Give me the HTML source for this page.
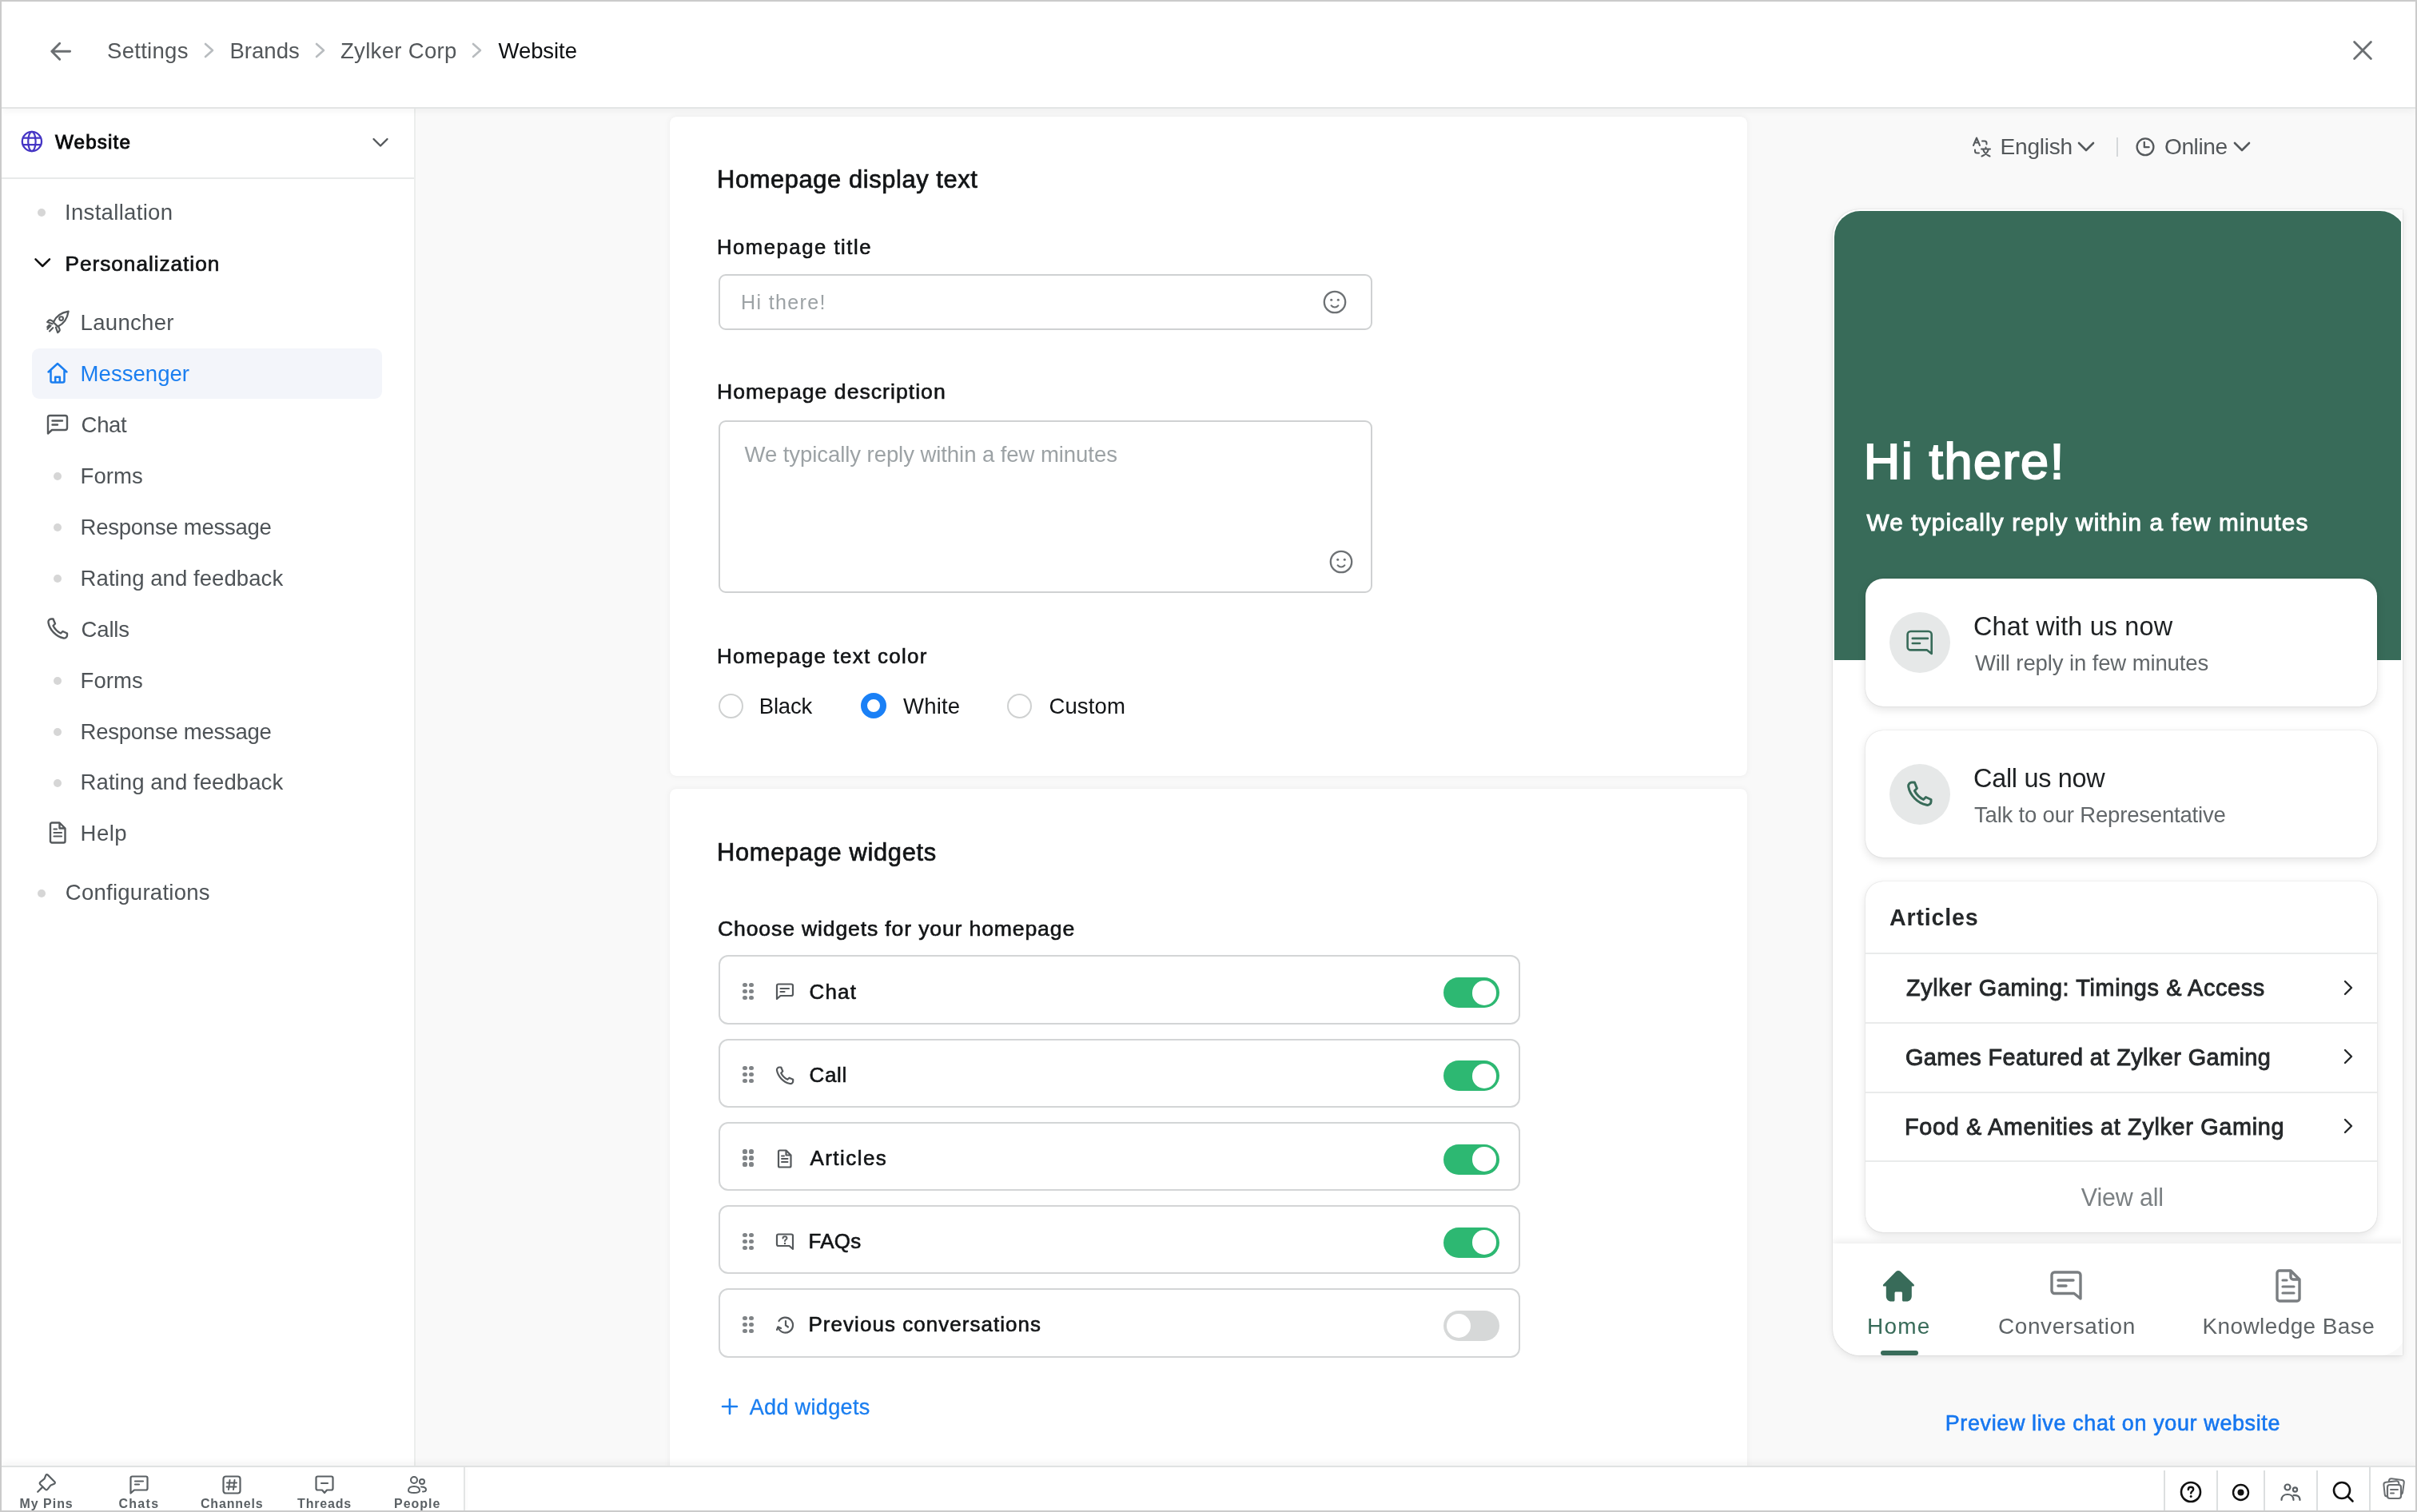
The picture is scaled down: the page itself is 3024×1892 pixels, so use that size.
<!DOCTYPE html>
<html><head><meta charset="utf-8"><title>Website - Messenger</title>
<style>
html,body{margin:0;padding:0;}
body{width:3024px;height:1892px;overflow:hidden;position:relative;background:#fff;font-family:"Liberation Sans",sans-serif;}
.t{position:absolute;white-space:pre;}
svg{overflow:visible}
</style></head><body>
<div style="position:absolute;left:2px;top:2px;width:3020px;height:1888px;background:#f9f9f9"></div><div style="position:absolute;left:2px;top:134px;width:518px;height:1702px;background:#fff;border-right:2px solid #eceeed;box-sizing:border-box"></div><div style="position:absolute;left:2px;top:2px;width:3020px;height:134px;background:#fff;border-bottom:2px solid #e3e5e5;box-sizing:border-box;box-shadow:0 3px 9px rgba(0,0,0,0.045)"></div><svg style="position:absolute;left:60px;top:50px;" width="34" height="28" viewBox="0 0 34 28" fill="none"><path d="M27.6 14.3H4.8M14.7 4.3L4.8 14.3L14.7 24.3" stroke="#6b6f72" stroke-width="2.9" stroke-linecap="round" stroke-linejoin="round"/></svg><svg style="position:absolute;left:254px;top:52px;" width="16" height="22" viewBox="0 0 16 22" fill="none"><path d="M3 3L12 11L3 19" stroke="#b8bcbf" stroke-width="2.6" stroke-linecap="round" stroke-linejoin="round"/></svg><svg style="position:absolute;left:393px;top:52px;" width="16" height="22" viewBox="0 0 16 22" fill="none"><path d="M3 3L12 11L3 19" stroke="#b8bcbf" stroke-width="2.6" stroke-linecap="round" stroke-linejoin="round"/></svg><svg style="position:absolute;left:589px;top:52px;" width="16" height="22" viewBox="0 0 16 22" fill="none"><path d="M3 3L12 11L3 19" stroke="#b8bcbf" stroke-width="2.6" stroke-linecap="round" stroke-linejoin="round"/></svg><svg style="position:absolute;left:2940px;top:47px;" width="32" height="32" viewBox="0 0 32 32" fill="none"><path d="M5.6 5.6L26.4 26.4M26.4 5.6L5.6 26.4" stroke="#6b6f72" stroke-width="2.8" stroke-linecap="round"/></svg><div style="position:absolute;left:2px;top:222px;width:516px;height:2px;background:#e8eaea"></div><svg style="position:absolute;left:26px;top:163px;" width="28" height="28" viewBox="0 0 28 28" fill="none"><circle cx="13.9" cy="14" r="12.1" stroke="#4535c4" stroke-width="2.3"/><ellipse cx="13.9" cy="14" rx="4.7" ry="12.1" stroke="#4535c4" stroke-width="2.2"/><path d="M2.5 9.6H25.3M2.5 18.1H25.3" stroke="#4535c4" stroke-width="2.2"/></svg><svg style="position:absolute;left:463px;top:170px;" width="26" height="16" viewBox="0 0 26 16" fill="none"><path d="M4.5 4L13 12.5L21.5 4" stroke="#53575a" stroke-width="2.3" stroke-linecap="round" stroke-linejoin="round"/></svg><div style="position:absolute;left:47.0px;top:261.0px;width:10px;height:10px;border-radius:50%;background:#d6d6d6"></div><svg style="position:absolute;left:41px;top:320px;" width="24" height="18" viewBox="0 0 24 18" fill="none"><path d="M3.5 4.3L12.2 13L21 4.3" stroke="#111" stroke-width="2.5" stroke-linecap="round" stroke-linejoin="round"/></svg><div style="position:absolute;left:40px;top:436px;width:438px;height:63px;background:#f3f5fa;border-radius:9px"></div><svg style="position:absolute;left:56px;top:387.1px;" width="32" height="32" viewBox="0 0 32 32" fill="none"><path d="M10.8 16.2C13.5 9.8 20 4.2 29.6 2.6C28.2 12 22.6 18.6 16.3 21.6Z" stroke="#55595c" stroke-width="2.3" stroke-linejoin="round"/><circle cx="20.6" cy="11.6" r="2.4" stroke="#55595c" stroke-width="2.1"/><path d="M11.2 15.4L7.2 13.6C6.4 13.3 5.6 13.5 5 14.1L3.2 16L9.6 18.2M17 21.2L18.6 25.2C18.9 26 18.7 26.8 18.1 27.4L16.2 29.2L13.9 22.6" stroke="#55595c" stroke-width="2.2" stroke-linejoin="round" stroke-linecap="round"/><path d="M7.6 20.6L3.4 24.8M10.2 23.2L6 27.4M5.8 19.6L3.2 22.2" stroke="#55595c" stroke-width="2.1" stroke-linecap="round"/></svg><svg style="position:absolute;left:56px;top:451.0px;" width="32" height="32" viewBox="0 0 32 32" fill="none"><path d="M4.5 14.5L16 4L27.5 14.5M7.5 12V25.5C7.5 26.6 8.4 27.5 9.5 27.5H22.5C23.6 27.5 24.5 26.6 24.5 25.5V12M13.2 27.5V20.8H18.8V27.5" stroke="#1a7ef0" stroke-width="2.5" stroke-linecap="round" stroke-linejoin="round"/></svg><svg style="position:absolute;left:56px;top:514.9px;" width="32" height="32" viewBox="0 0 32 32" fill="none"><path d="M4 7.5C4 6.1 5.1 5 6.5 5H25.5C26.9 5 28 6.1 28 7.5V20.5C28 21.9 26.9 23 25.5 23H9L4 27.5Z" stroke="#55595c" stroke-width="2.4" stroke-linejoin="round"/><path d="M9.5 11.5H22M9.5 16.5H16" stroke="#55595c" stroke-width="2.4" stroke-linecap="round"/></svg><div style="position:absolute;left:66.7px;top:591.3px;width:10px;height:10px;border-radius:50%;background:#d6d6d6"></div><div style="position:absolute;left:66.7px;top:655.2px;width:10px;height:10px;border-radius:50%;background:#d6d6d6"></div><div style="position:absolute;left:66.7px;top:719.1px;width:10px;height:10px;border-radius:50%;background:#d6d6d6"></div><svg style="position:absolute;left:56px;top:770.5px;" width="32" height="32" viewBox="0 0 32 32" fill="none"><path d="M8 3.5C6 3.5 4 5.5 4.5 8C6 17 14 25.5 23.5 27.5C26 28 28 26 28 24V21.5L22.5 19L20 21.5C16 19.5 12.5 16 10.5 12L13 9.5L10.5 3.5Z" stroke="#55595c" stroke-width="2.4" stroke-linejoin="round"/></svg><div style="position:absolute;left:66.7px;top:846.9000000000001px;width:10px;height:10px;border-radius:50%;background:#d6d6d6"></div><div style="position:absolute;left:66.7px;top:910.8px;width:10px;height:10px;border-radius:50%;background:#d6d6d6"></div><div style="position:absolute;left:66.7px;top:974.7px;width:10px;height:10px;border-radius:50%;background:#d6d6d6"></div><svg style="position:absolute;left:56px;top:1026.1px;" width="32" height="32" viewBox="0 0 32 32" fill="none"><path d="M7 5.5C7 4.4 7.9 3.5 9 3.5H18.5L25.5 10.5V26.5C25.5 27.6 24.6 28.5 23.5 28.5H9C7.9 28.5 7 27.6 7 26.5Z M18.5 3.5V10.5H25.5" stroke="#55595c" stroke-width="2.4" stroke-linejoin="round"/><path d="M11.5 16H21M11.5 20.5H21M11.5 11.5H15" stroke="#55595c" stroke-width="2.2" stroke-linecap="round"/></svg><div style="position:absolute;left:47.0px;top:1113.0px;width:10px;height:10px;border-radius:50%;background:#d6d6d6"></div><div style="position:absolute;left:838px;top:146px;width:1348px;height:825px;background:#fff;border-radius:8px;box-shadow:0 0 1px rgba(0,0,0,0.08),0 0 8px rgba(0,0,0,0.05)"></div><div style="position:absolute;left:838px;top:987px;width:1348px;height:913px;background:#fff;border-radius:8px;box-shadow:0 0 1px rgba(0,0,0,0.08),0 0 8px rgba(0,0,0,0.05)"></div><div style="position:absolute;left:899px;top:343px;width:818px;height:70px;border:2px solid #cfd1d2;border-radius:9px;box-sizing:border-box"></div><svg style="position:absolute;left:1653.8px;top:362.0px;" width="32" height="32" viewBox="0 0 32 32" fill="none"><circle cx="16.0" cy="16.0" r="13.2" stroke="#6d7174" stroke-width="2.3"/><circle cx="11.7" cy="13.2" r="1.5" fill="#6d7174"/><circle cx="20.3" cy="13.2" r="1.5" fill="#6d7174"/><path d="M11.7 20.4C14.0 23.2 18.0 23.2 20.3 20.4" stroke="#6d7174" stroke-width="2.2" stroke-linecap="round"/></svg><div style="position:absolute;left:899px;top:526px;width:818px;height:216px;border:2px solid #cfd1d2;border-radius:9px;box-sizing:border-box"></div><svg style="position:absolute;left:1662.0px;top:687.0px;" width="32" height="32" viewBox="0 0 32 32" fill="none"><circle cx="16.0" cy="16.0" r="13.2" stroke="#6d7174" stroke-width="2.3"/><circle cx="11.7" cy="13.2" r="1.5" fill="#6d7174"/><circle cx="20.3" cy="13.2" r="1.5" fill="#6d7174"/><path d="M11.7 20.4C14.0 23.2 18.0 23.2 20.3 20.4" stroke="#6d7174" stroke-width="2.2" stroke-linecap="round"/></svg><div style="position:absolute;left:898.5px;top:867.5px;width:31px;height:31px;border-radius:50%;box-sizing:border-box;border:2px solid #cfd1d1;background:#fff"></div><div style="position:absolute;left:1077px;top:867px;width:32px;height:32px;border-radius:50%;box-sizing:border-box;border:8px solid #1a80f6;background:#fff"></div><div style="position:absolute;left:1260.0px;top:867.5px;width:31px;height:31px;border-radius:50%;box-sizing:border-box;border:2px solid #cfd1d1;background:#fff"></div><div style="position:absolute;left:899px;top:1195.4px;width:1003px;height:86.5px;border:2px solid #d3d5d6;border-radius:12px;box-sizing:border-box;background:#fff"></div><div style="position:absolute;left:929.4px;top:1230.1000000000001px;width:5.2px;height:5.2px;border-radius:50%;background:#808487"></div><div style="position:absolute;left:937.4px;top:1230.1000000000001px;width:5.2px;height:5.2px;border-radius:50%;background:#808487"></div><div style="position:absolute;left:929.4px;top:1238.1000000000001px;width:5.2px;height:5.2px;border-radius:50%;background:#808487"></div><div style="position:absolute;left:937.4px;top:1238.1000000000001px;width:5.2px;height:5.2px;border-radius:50%;background:#808487"></div><div style="position:absolute;left:929.4px;top:1246.1000000000001px;width:5.2px;height:5.2px;border-radius:50%;background:#808487"></div><div style="position:absolute;left:937.4px;top:1246.1000000000001px;width:5.2px;height:5.2px;border-radius:50%;background:#808487"></div><svg style="position:absolute;left:968px;top:1227.4px;" width="28" height="28" viewBox="0 0 28 28" fill="none"><path d="M4 6.5C4 5.4 4.9 4.5 6 4.5H22C23.1 4.5 24 5.4 24 6.5V17C24 18.1 23.1 19 22 19H8.5L4 23Z" stroke="#55595c" stroke-width="2.2" stroke-linejoin="round"/><path d="M8.5 10H19M8.5 14H13.5" stroke="#55595c" stroke-width="2.2" stroke-linecap="round"/></svg><div style="position:absolute;left:1806px;top:1223.2px;width:70px;height:38px;border-radius:19px;background:#2db872"></div><div style="position:absolute;left:1841.5px;top:1227.0px;width:30.5px;height:30.5px;border-radius:50%;background:#fff"></div><div style="position:absolute;left:899px;top:1299.5500000000002px;width:1003px;height:86.5px;border:2px solid #d3d5d6;border-radius:12px;box-sizing:border-box;background:#fff"></div><div style="position:absolute;left:929.4px;top:1334.2500000000002px;width:5.2px;height:5.2px;border-radius:50%;background:#808487"></div><div style="position:absolute;left:937.4px;top:1334.2500000000002px;width:5.2px;height:5.2px;border-radius:50%;background:#808487"></div><div style="position:absolute;left:929.4px;top:1342.2500000000002px;width:5.2px;height:5.2px;border-radius:50%;background:#808487"></div><div style="position:absolute;left:937.4px;top:1342.2500000000002px;width:5.2px;height:5.2px;border-radius:50%;background:#808487"></div><div style="position:absolute;left:929.4px;top:1350.2500000000002px;width:5.2px;height:5.2px;border-radius:50%;background:#808487"></div><div style="position:absolute;left:937.4px;top:1350.2500000000002px;width:5.2px;height:5.2px;border-radius:50%;background:#808487"></div><svg style="position:absolute;left:968px;top:1331.5500000000002px;" width="28" height="28" viewBox="0 0 28 28" fill="none"><path d="M7 3.5C5.3 3.5 3.6 5.2 4 7.3C5.3 15 12.2 22.3 20.3 24C22.4 24.4 24.2 22.7 24.2 21V18.8L19.5 16.7L17.3 18.8C13.9 17.1 10.9 14.1 9.2 10.7L11.3 8.5L9.2 3.5Z" stroke="#55595c" stroke-width="2.2" stroke-linejoin="round"/></svg><div style="position:absolute;left:1806px;top:1327.3500000000001px;width:70px;height:38px;border-radius:19px;background:#2db872"></div><div style="position:absolute;left:1841.5px;top:1331.15px;width:30.5px;height:30.5px;border-radius:50%;background:#fff"></div><div style="position:absolute;left:899px;top:1403.7px;width:1003px;height:86.5px;border:2px solid #d3d5d6;border-radius:12px;box-sizing:border-box;background:#fff"></div><div style="position:absolute;left:929.4px;top:1438.4px;width:5.2px;height:5.2px;border-radius:50%;background:#808487"></div><div style="position:absolute;left:937.4px;top:1438.4px;width:5.2px;height:5.2px;border-radius:50%;background:#808487"></div><div style="position:absolute;left:929.4px;top:1446.4px;width:5.2px;height:5.2px;border-radius:50%;background:#808487"></div><div style="position:absolute;left:937.4px;top:1446.4px;width:5.2px;height:5.2px;border-radius:50%;background:#808487"></div><div style="position:absolute;left:929.4px;top:1454.4px;width:5.2px;height:5.2px;border-radius:50%;background:#808487"></div><div style="position:absolute;left:937.4px;top:1454.4px;width:5.2px;height:5.2px;border-radius:50%;background:#808487"></div><svg style="position:absolute;left:968px;top:1435.7px;" width="28" height="28" viewBox="0 0 28 28" fill="none"><path d="M6 5C6 4.2 6.7 3.5 7.5 3.5H15.5L21.5 9.5V23C21.5 23.8 20.8 24.5 20 24.5H7.5C6.7 24.5 6 23.8 6 23Z M15.5 3.5V9.5H21.5" stroke="#55595c" stroke-width="2.2" stroke-linejoin="round"/><path d="M10 14H17.5M10 18H17.5M10 10.5H13" stroke="#55595c" stroke-width="2" stroke-linecap="round"/></svg><div style="position:absolute;left:1806px;top:1431.5px;width:70px;height:38px;border-radius:19px;background:#2db872"></div><div style="position:absolute;left:1841.5px;top:1435.3px;width:30.5px;height:30.5px;border-radius:50%;background:#fff"></div><div style="position:absolute;left:899px;top:1507.8500000000001px;width:1003px;height:86.5px;border:2px solid #d3d5d6;border-radius:12px;box-sizing:border-box;background:#fff"></div><div style="position:absolute;left:929.4px;top:1542.5500000000002px;width:5.2px;height:5.2px;border-radius:50%;background:#808487"></div><div style="position:absolute;left:937.4px;top:1542.5500000000002px;width:5.2px;height:5.2px;border-radius:50%;background:#808487"></div><div style="position:absolute;left:929.4px;top:1550.5500000000002px;width:5.2px;height:5.2px;border-radius:50%;background:#808487"></div><div style="position:absolute;left:937.4px;top:1550.5500000000002px;width:5.2px;height:5.2px;border-radius:50%;background:#808487"></div><div style="position:absolute;left:929.4px;top:1558.5500000000002px;width:5.2px;height:5.2px;border-radius:50%;background:#808487"></div><div style="position:absolute;left:937.4px;top:1558.5500000000002px;width:5.2px;height:5.2px;border-radius:50%;background:#808487"></div><svg style="position:absolute;left:968px;top:1539.8500000000001px;" width="28" height="28" viewBox="0 0 28 28" fill="none"><path d="M4 6.5C4 5.4 4.9 4.5 6 4.5H22C23.1 4.5 24 5.4 24 6.5V23L19.5 19H6C4.9 19 4 18.1 4 17Z" stroke="#55595c" stroke-width="2.2" stroke-linejoin="round"/><path d="M11.5 9.5C11.5 8 12.6 7.2 14 7.2C15.4 7.2 16.5 8.1 16.5 9.4C16.5 11 14 11.2 14 13" stroke="#55595c" stroke-width="1.9" stroke-linecap="round"/><circle cx="14" cy="16" r="1.2" fill="#55595c"/></svg><div style="position:absolute;left:1806px;top:1535.65px;width:70px;height:38px;border-radius:19px;background:#2db872"></div><div style="position:absolute;left:1841.5px;top:1539.45px;width:30.5px;height:30.5px;border-radius:50%;background:#fff"></div><div style="position:absolute;left:899px;top:1612.0px;width:1003px;height:86.5px;border:2px solid #d3d5d6;border-radius:12px;box-sizing:border-box;background:#fff"></div><div style="position:absolute;left:929.4px;top:1646.7px;width:5.2px;height:5.2px;border-radius:50%;background:#808487"></div><div style="position:absolute;left:937.4px;top:1646.7px;width:5.2px;height:5.2px;border-radius:50%;background:#808487"></div><div style="position:absolute;left:929.4px;top:1654.7px;width:5.2px;height:5.2px;border-radius:50%;background:#808487"></div><div style="position:absolute;left:937.4px;top:1654.7px;width:5.2px;height:5.2px;border-radius:50%;background:#808487"></div><div style="position:absolute;left:929.4px;top:1662.7px;width:5.2px;height:5.2px;border-radius:50%;background:#808487"></div><div style="position:absolute;left:937.4px;top:1662.7px;width:5.2px;height:5.2px;border-radius:50%;background:#808487"></div><svg style="position:absolute;left:968px;top:1644.0px;" width="28" height="28" viewBox="0 0 28 28" fill="none"><path d="M5.5 17A9.5 9.5 0 1 0 6.5 9" stroke="#55595c" stroke-width="2.2" stroke-linecap="round"/><path d="M4.5 12.5V19.5H10" stroke="#55595c" stroke-width="0" /><path d="M4 20L5.5 16.5L9 18" stroke="#55595c" stroke-width="2.2" stroke-linecap="round" stroke-linejoin="round"/><path d="M15 9V14.5L18 16.5" stroke="#55595c" stroke-width="2.2" stroke-linecap="round"/></svg><div style="position:absolute;left:1806px;top:1639.8px;width:70px;height:38px;border-radius:19px;background:#d6d8d8"></div><div style="position:absolute;left:1809.5px;top:1643.6px;width:30.5px;height:30.5px;border-radius:50%;background:#fff"></div><svg style="position:absolute;left:901px;top:1748px;" width="24" height="24" viewBox="0 0 24 24" fill="none"><path d="M12 3V21M3 12H21" stroke="#1a7ef0" stroke-width="2.6" stroke-linecap="round"/></svg><svg style="position:absolute;left:2466px;top:170px;" width="26" height="28" viewBox="0 0 26 28" fill="none"><path d="M3 12L7 2.5L11 12M4.5 8.5H9.5" stroke="#55595c" stroke-width="2" stroke-linecap="round" stroke-linejoin="round"/><path d="M14 6.5H17C18.5 6.5 19.5 7.5 19.5 9V10.5" stroke="#55595c" stroke-width="2" stroke-linecap="round"/><path d="M5 17.5V19C5 20.5 6 21.5 7.5 21.5H10" stroke="#55595c" stroke-width="2" stroke-linecap="round"/><path d="M13 16.5H24M18.5 14.5V16.5M15 16.5C16 20.5 19 23.5 23.5 25.5M22 16.5C21 20.5 18 23.5 13.5 25.5" stroke="#55595c" stroke-width="2" stroke-linecap="round"/></svg><svg style="position:absolute;left:2598px;top:176px;" width="24" height="15" viewBox="0 0 24 15" fill="none"><path d="M3 3L12 12L21 3" stroke="#55595c" stroke-width="2.6" stroke-linecap="round" stroke-linejoin="round"/></svg><div style="position:absolute;left:2648px;top:172px;width:2px;height:24px;background:#d5d8da"></div><svg style="position:absolute;left:2670px;top:171px;" width="28" height="28" viewBox="0 0 28 28" fill="none"><circle cx="14" cy="12.8" r="10.4" stroke="#55595c" stroke-width="2.3"/><path d="M12.8 7V13.2H18.6" stroke="#55595c" stroke-width="2.3" stroke-linecap="round" stroke-linejoin="round"/></svg><svg style="position:absolute;left:2793px;top:176px;" width="24" height="15" viewBox="0 0 24 15" fill="none"><path d="M3 3L12 12L21 3" stroke="#55595c" stroke-width="2.6" stroke-linecap="round" stroke-linejoin="round"/></svg><div style="position:absolute;left:2293px;top:262px;width:712.5px;height:1434px;overflow:hidden;border-radius:34px 0 0 34px;box-shadow:0 0 2px rgba(0,0,0,0.16),0 3px 10px rgba(0,0,0,0.09)"><div style="position:absolute;left:0;top:0;width:718px;height:1434px;border-radius:34px;overflow:hidden;background:#fff"><div style="position:absolute;left:1.5px;top:1.5px;width:715px;height:562px;border-radius:32.5px 32.5px 0 0;background:#386b59"></div><div style="position:absolute;left:0;top:1294px;width:760px;height:140px;background:#fff;box-shadow:0 -3px 9px rgba(0,0,0,0.08)"></div><div style="position:absolute;left:711px;top:14px;width:1.5px;height:1390px;background:#fff"></div></div></div><div style="position:absolute;left:2334px;top:723.6px;width:640px;height:160.10000000000002px;background:#fff;border-radius:22px;box-shadow:0 0 1.5px rgba(0,0,0,0.2),0 4px 12px rgba(0,0,0,0.11)"></div><div style="position:absolute;left:2334px;top:914px;width:640px;height:159.29999999999995px;background:#fff;border-radius:22px;box-shadow:0 0 1.5px rgba(0,0,0,0.2),0 4px 12px rgba(0,0,0,0.11)"></div><div style="position:absolute;left:2334px;top:1103.4px;width:640px;height:438.5999999999999px;background:#fff;border-radius:22px;box-shadow:0 0 1.5px rgba(0,0,0,0.2),0 4px 12px rgba(0,0,0,0.11)"></div><div style="position:absolute;left:2363.8px;top:765.7px;width:76px;height:76px;border-radius:50%;background:#e6e8e8"></div><div style="position:absolute;left:2363.8px;top:955.6px;width:76px;height:76px;border-radius:50%;background:#e6e8e8"></div><svg style="position:absolute;left:2383px;top:785px;" width="38" height="38" viewBox="0 0 38 38" fill="none"><path d="M7.6 5H29.7C31.9 5 33.7 6.8 33.7 9V33L28 28.4H7.6C5.4 28.4 3.6 26.6 3.6 24.4V9C3.6 6.8 5.4 5 7.6 5Z" stroke="#386b59" stroke-width="2.6" stroke-linejoin="round"/><path d="M9.8 13.9H28.9M9.8 20H19" stroke="#386b59" stroke-width="2.6" stroke-linecap="round"/></svg><svg style="position:absolute;left:2383px;top:975px;" width="38" height="38" viewBox="0 0 38 38" fill="none"><path d="M9 4C6.7 4 4.2 6.3 4.7 9.2C6.5 20 16 30 27.5 32.3C30.3 32.9 33 30.6 33 28.3V25.5L26.5 22.5L23.5 25.5C18.8 23.2 14.7 19 12.4 14.5L15.4 11.5L12.4 4Z" stroke="#386b59" stroke-width="3" stroke-linejoin="round"/></svg><div style="position:absolute;left:2334px;top:1191.7px;width:640px;height:2.0px;background:#e9ebeb"></div><div style="position:absolute;left:2334px;top:1279px;width:640px;height:2px;background:#e9ebeb"></div><div style="position:absolute;left:2334px;top:1365.6px;width:640px;height:2.0px;background:#e9ebeb"></div><div style="position:absolute;left:2334px;top:1452px;width:640px;height:2px;background:#e9ebeb"></div><svg style="position:absolute;left:2930px;top:1223.5px;" width="16" height="24" viewBox="0 0 16 24" fill="none"><path d="M4 4L12 12L4 20" stroke="#25282a" stroke-width="2.4" stroke-linecap="round" stroke-linejoin="round"/></svg><svg style="position:absolute;left:2930px;top:1310.3px;" width="16" height="24" viewBox="0 0 16 24" fill="none"><path d="M4 4L12 12L4 20" stroke="#25282a" stroke-width="2.4" stroke-linecap="round" stroke-linejoin="round"/></svg><svg style="position:absolute;left:2930px;top:1397.1px;" width="16" height="24" viewBox="0 0 16 24" fill="none"><path d="M4 4L12 12L4 20" stroke="#25282a" stroke-width="2.4" stroke-linecap="round" stroke-linejoin="round"/></svg><svg style="position:absolute;left:2353px;top:1587px;" width="44" height="44" viewBox="0 0 44 44" fill="none"><path d="M22 3C23 3 24 3.4 24.8 4.1L41.5 20.2C42.3 21 42 22.6 40.7 22.6H38.8V35C38.8 38.6 36 41.6 32.4 41.6H28.5C27.7 41.6 27 40.9 27 40.1V30.9C27 30.1 26.3 29.4 25.5 29.4H19C18.2 29.4 17.5 30.1 17.5 30.9V40.1C17.5 40.9 16.8 41.6 16 41.6H13.2C9.6 41.6 6.8 38.6 6.8 35V22.6H4.1C2.8 22.6 2.5 21 3.3 20.2L19.2 4.1C20 3.4 21 3 22 3Z" fill="#386b59"/></svg><div style="position:absolute;left:2352.5px;top:1690px;width:47.5px;height:6px;background:#386b59;border-radius:3px"></div><svg style="position:absolute;left:2563px;top:1589px;" width="44" height="40" viewBox="0 0 44 40" fill="none"><path d="M4 6.5C4 4.6 5.6 3 7.5 3H36.5C38.4 3 40 4.6 40 6.5V36L32 29.5H7.5C5.6 29.5 4 27.9 4 26Z" stroke="#7a7e81" stroke-width="3.4" stroke-linejoin="round"/><path d="M12 13H31M12 20H22" stroke="#7a7e81" stroke-width="3.4" stroke-linecap="round"/></svg><svg style="position:absolute;left:2845px;top:1587px;" width="36" height="44" viewBox="0 0 36 44" fill="none"><path d="M4 6C4 4.3 5.3 3 7 3H21L32 14V38C32 39.7 30.7 41 29 41H7C5.3 41 4 39.7 4 38Z M21 3V11C21 12.7 22.3 14 24 14H32" stroke="#7a7e81" stroke-width="3.4" stroke-linejoin="round"/><path d="M11 23H25M11 31H25M11 15H16" stroke="#7a7e81" stroke-width="3.2" stroke-linecap="round"/></svg><div style="position:absolute;left:2px;top:1834px;width:3020px;height:56px;background:#fff;border-top:2px solid #e0e2e2;box-sizing:border-box;box-shadow:0 -3px 10px rgba(0,0,0,0.05)"></div><div style="position:absolute;left:580px;top:1836px;width:2px;height:54px;background:#e3e5e5;box-shadow:2px 0 4px rgba(0,0,0,0.03)"></div><svg style="position:absolute;left:44px;top:1842px;" width="28" height="28" viewBox="0 0 28 28" fill="none"><path d="M15.8 3.6L24.4 12.2C25.2 13 24.9 14.3 23.9 14.7L19.6 16.4L15.4 21.6C14.7 22.5 13.5 22.5 12.8 21.8L6.2 15.2C5.5 14.5 5.5 13.3 6.4 12.6L11.6 8.4L13.3 4.1C13.7 3.1 15 2.8 15.8 3.6Z" stroke="#5a6064" stroke-width="2.2" stroke-linejoin="round"/><path d="M9.4 18.6L3.2 24.8" stroke="#5a6064" stroke-width="2.2" stroke-linecap="round"/></svg><svg style="position:absolute;left:160px;top:1844px;" width="28" height="28" viewBox="0 0 28 28" fill="none"><path d="M3.5 5.5C3.5 4.4 4.4 3.5 5.5 3.5H22.5C23.6 3.5 24.5 4.4 24.5 5.5V18.5C24.5 19.6 23.6 20.5 22.5 20.5H8L3.5 24.5Z" stroke="#5a6064" stroke-width="2.2" stroke-linejoin="round"/><path d="M9 9.5H19M9 13.5H14" stroke="#5a6064" stroke-width="2.2" stroke-linecap="round"/></svg><svg style="position:absolute;left:276px;top:1844px;" width="28" height="28" viewBox="0 0 28 28" fill="none"><rect x="3.5" y="3.5" width="21" height="21" rx="3" stroke="#5a6064" stroke-width="2.2"/><path d="M11.5 8L10 20M17.5 8L16 20M8 11.5H20M7.5 16.5H19.5" stroke="#5a6064" stroke-width="2" stroke-linecap="round"/></svg><svg style="position:absolute;left:392px;top:1844px;" width="28" height="28" viewBox="0 0 28 28" fill="none"><path d="M3.5 5.5C3.5 4.4 4.4 3.5 5.5 3.5H22.5C23.6 3.5 24.5 4.4 24.5 5.5V18.5C24.5 19.6 23.6 20.5 22.5 20.5H17L14 24L11 20.5H5.5C4.4 20.5 3.5 19.6 3.5 18.5Z" stroke="#5a6064" stroke-width="2.2" stroke-linejoin="round"/><path d="M10 12H18" stroke="#5a6064" stroke-width="2.2" stroke-linecap="round"/></svg><svg style="position:absolute;left:508px;top:1844px;" width="28" height="28" viewBox="0 0 28 28" fill="none"><circle cx="10" cy="8" r="4" stroke="#5a6064" stroke-width="2"/><circle cx="20" cy="10" r="3" stroke="#5a6064" stroke-width="2"/><path d="M3 21C3 17.5 6 16 10 16C14 16 17 17.5 17 21C17 23 15 24 10 24C5 24 3 23 3 21Z" stroke="#5a6064" stroke-width="2"/><path d="M19 16.5C22.5 16.5 25 17.5 25 20C25 21.8 23.5 22.5 21 22.5" stroke="#5a6064" stroke-width="2" stroke-linecap="round"/></svg><div style="position:absolute;left:2707px;top:1840px;width:2px;height:50px;background:#dcdfe0"></div><div style="position:absolute;left:2773px;top:1840px;width:2px;height:50px;background:#dcdfe0"></div><div style="position:absolute;left:2832px;top:1840px;width:2px;height:50px;background:#dcdfe0"></div><div style="position:absolute;left:2897.6px;top:1840px;width:2.0px;height:50px;background:#dcdfe0"></div><div style="position:absolute;left:2964px;top:1836px;width:2px;height:54px;background:#dcdfe0"></div><svg style="position:absolute;left:2727px;top:1853px;" width="28" height="28" viewBox="0 0 28 28" fill="none"><circle cx="14" cy="14" r="12" stroke="#111" stroke-width="2.6"/><path d="M10.8 11C10.8 9 12.3 7.8 14 7.8C15.8 7.8 17.2 9 17.2 10.7C17.2 12.8 14.2 13 14.2 15.5" stroke="#111" stroke-width="2.4" stroke-linecap="round"/><circle cx="14.2" cy="19.5" r="1.5" fill="#111"/></svg><svg style="position:absolute;left:2790px;top:1854px;" width="27" height="27" viewBox="0 0 27 27" fill="none"><circle cx="13.5" cy="13.5" r="9.5" stroke="#111" stroke-width="2.4"/><circle cx="13.5" cy="13.5" r="4" fill="#111"/></svg><svg style="position:absolute;left:2852px;top:1853px;" width="28" height="28" viewBox="0 0 28 28" fill="none"><circle cx="10" cy="8" r="3.5" stroke="#5a6064" stroke-width="2.2"/><circle cx="19.5" cy="11" r="2.6" stroke="#5a6064" stroke-width="2.2"/><path d="M2.5 24C2.5 19.5 5.8 17 10 17C14.2 17 17.5 19.5 17.5 24" stroke="#5a6064" stroke-width="2.2" stroke-linecap="round"/><path d="M17.5 18.2C22 17.5 25.5 19.5 25.5 24" stroke="#5a6064" stroke-width="2.2" stroke-linecap="round"/></svg><svg style="position:absolute;left:2917px;top:1852px;" width="30" height="30" viewBox="0 0 30 30" fill="none"><circle cx="13" cy="13" r="10" stroke="#111" stroke-width="2.6"/><path d="M20.5 20.5L26.5 26.5" stroke="#111" stroke-width="2.6" stroke-linecap="round"/></svg><svg style="position:absolute;left:2979px;top:1848px;" width="32" height="30" viewBox="0 0 32 30" fill="none"><rect x="9" y="3" width="19" height="18" rx="3" transform="rotate(8 18 12)" stroke="#6a6e71" stroke-width="2"/><rect x="4" y="6" width="19" height="18" rx="3" transform="rotate(-6 13 15)" stroke="#6a6e71" stroke-width="2" fill="#fff"/><rect x="8" y="10" width="17" height="17" rx="3" stroke="#6a6e71" stroke-width="2.2" fill="#fff"/><path d="M12 16H21M12 20.5H16" stroke="#6a6e71" stroke-width="2" stroke-linecap="round"/></svg><div style="position:absolute;left:0;top:0;width:3024px;height:1892px;box-sizing:border-box;border:2px solid #cbcbcb;pointer-events:none"></div>
<div style="position:absolute;left:0;top:0;width:3024px;height:1892px;will-change:transform"><div class="t" style="left:134.00px;top:49.73px;font-size:27.54px;line-height:27.54px;font-weight:400;color:#53575a;letter-spacing:0.286px;">Settings</div><div class="t" style="left:287.50px;top:49.73px;font-size:27.54px;line-height:27.54px;font-weight:400;color:#53575a;letter-spacing:0.000px;">Brands</div><div class="t" style="left:426.00px;top:49.73px;font-size:27.54px;line-height:27.54px;font-weight:400;color:#53575a;letter-spacing:0.300px;">Zylker Corp</div><div class="t" style="left:623.50px;top:49.73px;font-size:27.54px;line-height:27.54px;font-weight:400;color:#0e1012;letter-spacing:-0.083px;">Website</div><div class="t" style="left:69.00px;top:166.25px;font-size:24.2px;line-height:24.2px;font-weight:400;color:#0a0b0c;letter-spacing:1.167px;-webkit-text-stroke:0.9px #0a0b0c;">Website</div><div class="t" style="left:81.00px;top:251.73px;font-size:27.54px;line-height:27.54px;font-weight:400;color:#4e5357;letter-spacing:0.309px;">Installation</div><div class="t" style="left:81.60px;top:316.64px;font-size:26.23px;line-height:26.23px;font-weight:400;color:#121416;letter-spacing:0.957px;-webkit-text-stroke:0.7px #121416;">Personalization</div><div class="t" style="left:100.60px;top:390.33px;font-size:27.54px;line-height:27.54px;font-weight:400;color:#4e5357;letter-spacing:0.286px;">Launcher</div><div class="t" style="left:100.60px;top:454.23px;font-size:27.54px;line-height:27.54px;font-weight:400;color:#1a7ef0;letter-spacing:0.025px;">Messenger</div><div class="t" style="left:101.60px;top:518.13px;font-size:27.54px;line-height:27.54px;font-weight:400;color:#4e5357;letter-spacing:-0.333px;">Chat</div><div class="t" style="left:100.60px;top:582.03px;font-size:27.54px;line-height:27.54px;font-weight:400;color:#4e5357;letter-spacing:0.050px;">Forms</div><div class="t" style="left:100.60px;top:645.93px;font-size:27.54px;line-height:27.54px;font-weight:400;color:#4e5357;letter-spacing:-0.267px;">Response message</div><div class="t" style="left:100.60px;top:709.83px;font-size:27.54px;line-height:27.54px;font-weight:400;color:#4e5357;letter-spacing:0.056px;">Rating and feedback</div><div class="t" style="left:101.60px;top:773.73px;font-size:27.54px;line-height:27.54px;font-weight:400;color:#4e5357;letter-spacing:-0.200px;">Calls</div><div class="t" style="left:100.60px;top:837.63px;font-size:27.54px;line-height:27.54px;font-weight:400;color:#4e5357;letter-spacing:0.050px;">Forms</div><div class="t" style="left:100.60px;top:901.53px;font-size:27.54px;line-height:27.54px;font-weight:400;color:#4e5357;letter-spacing:-0.267px;">Response message</div><div class="t" style="left:100.60px;top:965.43px;font-size:27.54px;line-height:27.54px;font-weight:400;color:#4e5357;letter-spacing:0.056px;">Rating and feedback</div><div class="t" style="left:100.60px;top:1029.33px;font-size:27.54px;line-height:27.54px;font-weight:400;color:#4e5357;letter-spacing:0.467px;">Help</div><div class="t" style="left:81.80px;top:1103.13px;font-size:27.54px;line-height:27.54px;font-weight:400;color:#4e5357;letter-spacing:0.246px;">Configurations</div><div class="t" style="left:897.00px;top:209.91px;font-size:30.87px;line-height:30.87px;font-weight:400;color:#121416;letter-spacing:0.600px;-webkit-text-stroke:0.7px #121416;">Homepage display text</div><div class="t" style="left:897.00px;top:297.33px;font-size:25.65px;line-height:25.65px;font-weight:400;color:#121416;letter-spacing:1.538px;-webkit-text-stroke:0.6px #121416;">Homepage title</div><div class="t" style="left:927.00px;top:365.62px;font-size:25.07px;line-height:25.07px;font-weight:400;color:#9ca2a5;letter-spacing:1.350px;">Hi there!</div><div class="t" style="left:897.00px;top:477.46px;font-size:26.67px;line-height:26.67px;font-weight:400;color:#121416;letter-spacing:1.000px;-webkit-text-stroke:0.6px #121416;">Homepage description</div><div class="t" style="left:931.50px;top:554.73px;font-size:27.54px;line-height:27.54px;font-weight:400;color:#9ca2a5;letter-spacing:-0.074px;">We typically reply within a few minutes</div><div class="t" style="left:897.00px;top:808.58px;font-size:25.94px;line-height:25.94px;font-weight:400;color:#121416;letter-spacing:1.278px;-webkit-text-stroke:0.6px #121416;">Homepage text color</div><div class="t" style="left:949.70px;top:869.53px;font-size:27.54px;line-height:27.54px;font-weight:400;color:#121416;letter-spacing:-0.175px;">Black</div><div class="t" style="left:1130.00px;top:869.53px;font-size:27.54px;line-height:27.54px;font-weight:400;color:#121416;letter-spacing:0.175px;">White</div><div class="t" style="left:1312.40px;top:869.53px;font-size:27.54px;line-height:27.54px;font-weight:400;color:#121416;letter-spacing:0.120px;">Custom</div><div class="t" style="left:897.00px;top:1051.51px;font-size:30.87px;line-height:30.87px;font-weight:400;color:#121416;letter-spacing:0.667px;-webkit-text-stroke:0.7px #121416;">Homepage widgets</div><div class="t" style="left:898.00px;top:1149.46px;font-size:26.67px;line-height:26.67px;font-weight:400;color:#121416;letter-spacing:0.819px;-webkit-text-stroke:0.6px #121416;">Choose widgets for your homepage</div><div class="t" style="left:1012.50px;top:1228.78px;font-size:25.94px;line-height:25.94px;font-weight:400;color:#121416;letter-spacing:1.233px;-webkit-text-stroke:0.6px #121416;">Chat</div><div class="t" style="left:1012.50px;top:1332.93px;font-size:25.94px;line-height:25.94px;font-weight:400;color:#121416;letter-spacing:0.733px;-webkit-text-stroke:0.6px #121416;">Call</div><div class="t" style="left:1013.50px;top:1437.08px;font-size:25.94px;line-height:25.94px;font-weight:400;color:#121416;letter-spacing:1.457px;-webkit-text-stroke:0.6px #121416;">Articles</div><div class="t" style="left:1011.50px;top:1541.23px;font-size:25.94px;line-height:25.94px;font-weight:400;color:#121416;letter-spacing:0.300px;-webkit-text-stroke:0.6px #121416;">FAQs</div><div class="t" style="left:1011.50px;top:1645.38px;font-size:25.94px;line-height:25.94px;font-weight:400;color:#121416;letter-spacing:1.062px;-webkit-text-stroke:0.6px #121416;">Previous conversations</div><div class="t" style="left:937.70px;top:1747.10px;font-size:27.1px;line-height:27.1px;font-weight:400;color:#1a7ef0;letter-spacing:0.300px;-webkit-text-stroke:0.3px #1a7ef0;">Add widgets</div><div class="t" style="left:2502.50px;top:169.64px;font-size:28.12px;line-height:28.12px;font-weight:400;color:#53575a;letter-spacing:-0.250px;">English</div><div class="t" style="left:2708.00px;top:169.64px;font-size:28.12px;line-height:28.12px;font-weight:400;color:#53575a;letter-spacing:-0.440px;">Online</div><div class="t" style="left:2331.80px;top:546.03px;font-size:63.04px;line-height:63.04px;font-weight:400;color:#fff;letter-spacing:1.525px;-webkit-text-stroke:2px #fff;">Hi there!</div><div class="t" style="left:2335.50px;top:639.20px;font-size:29.71px;line-height:29.71px;font-weight:400;color:#fff;letter-spacing:1.197px;-webkit-text-stroke:1.0px #fff;">We typically reply within a few minutes</div><div class="t" style="left:2469.00px;top:767.57px;font-size:32.46px;line-height:32.46px;font-weight:400;color:#1e2123;letter-spacing:0.133px;">Chat with us now</div><div class="t" style="left:2471.00px;top:815.73px;font-size:27.54px;line-height:27.54px;font-weight:400;color:#62676a;letter-spacing:-0.125px;">Will reply in few minutes</div><div class="t" style="left:2469.00px;top:958.37px;font-size:32.46px;line-height:32.46px;font-weight:400;color:#1e2123;letter-spacing:-0.300px;">Call us now</div><div class="t" style="left:2470.00px;top:1005.53px;font-size:27.54px;line-height:27.54px;font-weight:400;color:#62676a;letter-spacing:-0.200px;">Talk to our Representative</div><div class="t" style="left:2364.00px;top:1134.15px;font-size:28.7px;line-height:28.7px;font-weight:700;color:#25282a;letter-spacing:0.786px;">Articles</div><div class="t" style="left:2385.00px;top:1222.13px;font-size:28.84px;line-height:28.84px;font-weight:400;color:#25282a;letter-spacing:0.627px;-webkit-text-stroke:0.9px #25282a;">Zylker Gaming: Timings &amp; Access</div><div class="t" style="left:2384.00px;top:1308.93px;font-size:28.84px;line-height:28.84px;font-weight:400;color:#25282a;letter-spacing:0.433px;-webkit-text-stroke:0.9px #25282a;">Games Featured at Zylker Gaming</div><div class="t" style="left:2383.00px;top:1395.73px;font-size:28.84px;line-height:28.84px;font-weight:400;color:#25282a;letter-spacing:0.656px;-webkit-text-stroke:0.9px #25282a;">Food &amp; Amenities at Zylker Gaming</div><div class="t" style="left:2603.80px;top:1483.29px;font-size:30.43px;line-height:30.43px;font-weight:400;color:#7b8083;letter-spacing:-0.143px;">View all</div><div class="t" style="left:2336.00px;top:1646.37px;font-size:27.97px;line-height:27.97px;font-weight:400;color:#386b59;letter-spacing:1.233px;">Home</div><div class="t" style="left:2500.00px;top:1646.37px;font-size:27.97px;line-height:27.97px;font-weight:400;color:#5e6366;letter-spacing:0.591px;">Conversation</div><div class="t" style="left:2755.50px;top:1646.37px;font-size:27.97px;line-height:27.97px;font-weight:400;color:#5e6366;letter-spacing:0.408px;">Knowledge Base</div><div class="t" style="left:2433.70px;top:1767.82px;font-size:26.96px;line-height:26.96px;font-weight:400;color:#1677f0;letter-spacing:0.634px;-webkit-text-stroke:0.6px #1677f0;">Preview live chat on your website</div><div class="t" style="left:24.50px;top:1874.03px;font-size:15.94px;line-height:15.94px;font-weight:700;color:#5a6064;letter-spacing:1.000px;">My Pins</div><div class="t" style="left:148.40px;top:1874.03px;font-size:15.94px;line-height:15.94px;font-weight:700;color:#5a6064;letter-spacing:1.350px;">Chats</div><div class="t" style="left:251.00px;top:1874.03px;font-size:15.94px;line-height:15.94px;font-weight:700;color:#5a6064;letter-spacing:0.857px;">Channels</div><div class="t" style="left:372.10px;top:1874.03px;font-size:15.94px;line-height:15.94px;font-weight:700;color:#5a6064;letter-spacing:0.833px;">Threads</div><div class="t" style="left:493.00px;top:1874.03px;font-size:15.94px;line-height:15.94px;font-weight:700;color:#5a6064;letter-spacing:1.000px;">People</div></div>
</body></html>
